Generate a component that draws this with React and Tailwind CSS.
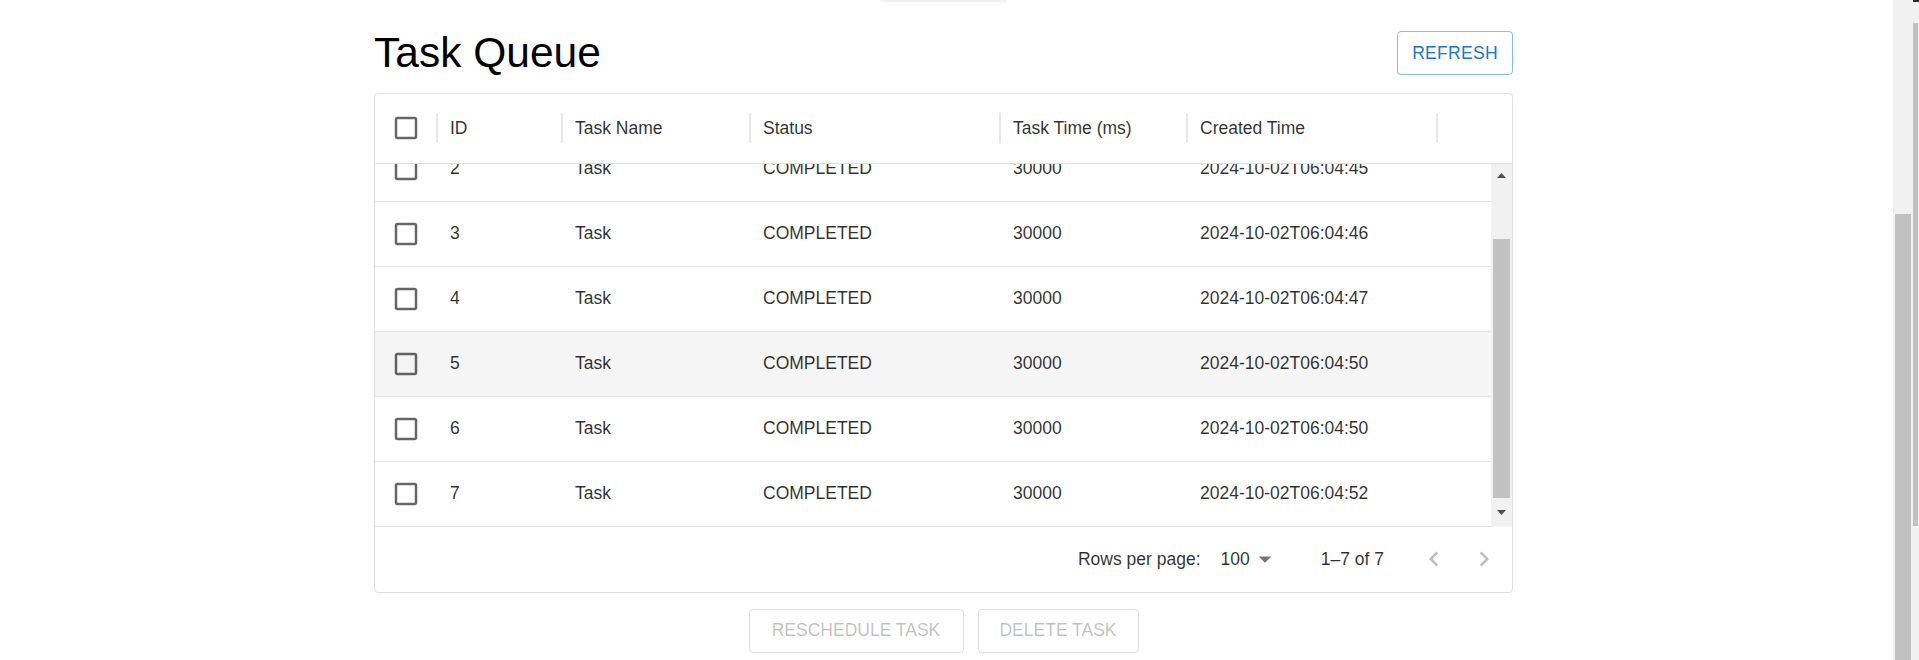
import React from "react"

const rows = [
  { id: 2, name: "Task", status: "COMPLETED", time: 30000, created: "2024-10-02T06:04:45" },
  { id: 3, name: "Task", status: "COMPLETED", time: 30000, created: "2024-10-02T06:04:46" },
  { id: 4, name: "Task", status: "COMPLETED", time: 30000, created: "2024-10-02T06:04:47" },
  { id: 5, name: "Task", status: "COMPLETED", time: 30000, created: "2024-10-02T06:04:50", hover: true },
  { id: 6, name: "Task", status: "COMPLETED", time: 30000, created: "2024-10-02T06:04:50" },
  { id: 7, name: "Task", status: "COMPLETED", time: 30000, created: "2024-10-02T06:04:52" },
]

function Checkbox() {
  return (
    <svg viewBox="0 0 24 24" className="h-[30px] w-[30px]" fill="rgba(0,0,0,0.6)">
      <path d="M19 5v14H5V5h14m0-2H5c-1.11 0-2 .9-2 2v14c0 1.1.89 2 2 2h14c1.1 0 2-.9 2-2V5c0-1.1-.9-2-2-2z" />
    </svg>
  )
}

function Sep() {
  return <div className="h-[30px] w-[2px] shrink-0 bg-[#e8e8e8]" />
}

export default function App() {
  return (
    <div className="flex h-[660px] w-full overflow-hidden bg-white font-['Liberation_Sans',Arial,sans-serif] text-[17.5px] text-[rgba(0,0,0,0.82)]">
      <div className="flex flex-1 justify-center pr-[6px]">
        <div className="flex w-[1139px] flex-col">
          {/* bottom edge of something scrolled out of view */}
          <div className="mx-auto h-[2px] w-[127px] rounded-b bg-[#f2f2f2]" />

          {/* Title row */}
          <div className="mt-[25px] flex items-center justify-between">
            <h1 className="text-[42.5px] leading-[52.5px] text-black">Task Queue</h1>
            <button className="h-[44px] w-[116px] rounded border border-[rgba(25,118,210,0.5)] text-[17.5px] tracking-[0.3px] text-[#1976d2]">
              REFRESH
            </button>
          </div>

          {/* Data grid */}
          <div className="mt-[13px] flex flex-col rounded border border-[#e0e0e0]">
            {/* header */}
            <div className="flex h-[70px] items-center border-b border-[#e0e0e0]">
              <div className="flex w-[61px] shrink-0 justify-center"><Checkbox /></div>
              <Sep />
              <div className="w-[123px] shrink-0 pl-[12px]">ID</div>
              <Sep />
              <div className="w-[186px] shrink-0 pl-[12px]">Task Name</div>
              <Sep />
              <div className="w-[248px] shrink-0 pl-[12px]">Status</div>
              <Sep />
              <div className="w-[185px] shrink-0 pl-[12px]">Task Time (ms)</div>
              <Sep />
              <div className="w-[248px] shrink-0 pl-[12px]">Created Time</div>
              <Sep />
            </div>

            {/* body + scrollbar */}
            <div className="flex h-[363px]">
              <div className="flex-1 overflow-hidden">
                <div className="-mt-[27px] flex flex-col">
                  {rows.map((r) => (
                    <div
                      key={r.id}
                      className={`flex h-[65px] shrink-0 items-center border-b border-[#e0e0e0] ${r.hover ? "bg-[#f5f5f5]" : ""}`}
                    >
                      <div className="flex w-[63px] shrink-0 justify-center pr-[2px]"><Checkbox /></div>
                      <div className="w-[125px] shrink-0 pl-[12px]">{r.id}</div>
                      <div className="w-[188px] shrink-0 pl-[12px]">{r.name}</div>
                      <div className="w-[250px] shrink-0 pl-[12px]">{r.status}</div>
                      <div className="w-[187px] shrink-0 pl-[12px]">{r.time}</div>
                      <div className="w-[250px] shrink-0 pl-[12px]">{r.created}</div>
                    </div>
                  ))}
                </div>
              </div>
              <div className="flex w-[21px] flex-col items-center bg-[#f1f1f1]">
                <div className="flex h-[24px] items-center justify-center">
                  <svg width="9" height="5" viewBox="0 0 9 5"><polygon points="4.5,0 9,5 0,5" fill="#505050" /></svg>
                </div>
                <div className="mt-[51px] h-[259px] w-[17px] bg-[#c1c1c1]" />
                <div className="flex flex-1 items-center justify-center">
                  <svg width="9" height="5" viewBox="0 0 9 5"><polygon points="0,0 9,0 4.5,5" fill="#505050" /></svg>
                </div>
              </div>
            </div>

            {/* footer */}
            <div className="flex h-[65px] items-center justify-end pr-[3px]">
              <span>Rows per page:</span>
              <div className="ml-[20px] flex items-center">
                <span>100</span>
                <svg viewBox="0 0 24 24" className="h-[30px] w-[30px]" fill="rgba(0,0,0,0.54)">
                  <path d="M7 10l5 5 5-5z" />
                </svg>
              </div>
              <span className="ml-[41px]">1–7 of 7</span>
              <div className="ml-[25px] flex">
                <div className="flex h-[50px] w-[50px] items-center justify-center">
                  <svg viewBox="0 0 24 24" className="h-[30px] w-[30px]" fill="rgba(0,0,0,0.26)">
                    <path d="M15.41 7.41 14 6l-6 6 6 6 1.41-1.41L10.83 12z" />
                  </svg>
                </div>
                <div className="flex h-[50px] w-[50px] items-center justify-center">
                  <svg viewBox="0 0 24 24" className="h-[30px] w-[30px]" fill="rgba(0,0,0,0.26)">
                    <path d="M10 6 8.59 7.41 13.17 12l-4.58 4.59L10 18l6-6z" />
                  </svg>
                </div>
              </div>
            </div>
          </div>

          {/* actions */}
          <div className="mt-[16px] flex justify-center gap-[14px]">
            <button disabled className="h-[44px] w-[215px] rounded border border-[rgba(0,0,0,0.12)] text-[17.5px] text-[rgba(0,0,0,0.26)]">
              RESCHEDULE TASK
            </button>
            <button disabled className="h-[44px] w-[161px] rounded border border-[rgba(0,0,0,0.12)] text-[17.5px] text-[rgba(0,0,0,0.26)]">
              DELETE TASK
            </button>
          </div>
        </div>
      </div>

      {/* page scrollbar */}
      <div className="flex w-[20px] flex-col items-center bg-[#f1f1f1]">
        <div className="mt-[214px] w-[16px] flex-1 bg-[#c1c1c1]" />
      </div>
      <div className="flex w-[6px] flex-col bg-[#f1f1f1]">
        <div className="h-[2px] bg-[#2b2b2b]" />
        <div className="mt-[21px] h-[503px] w-[5px] bg-[#c1c1c1]" />
      </div>
    </div>
  )
}
